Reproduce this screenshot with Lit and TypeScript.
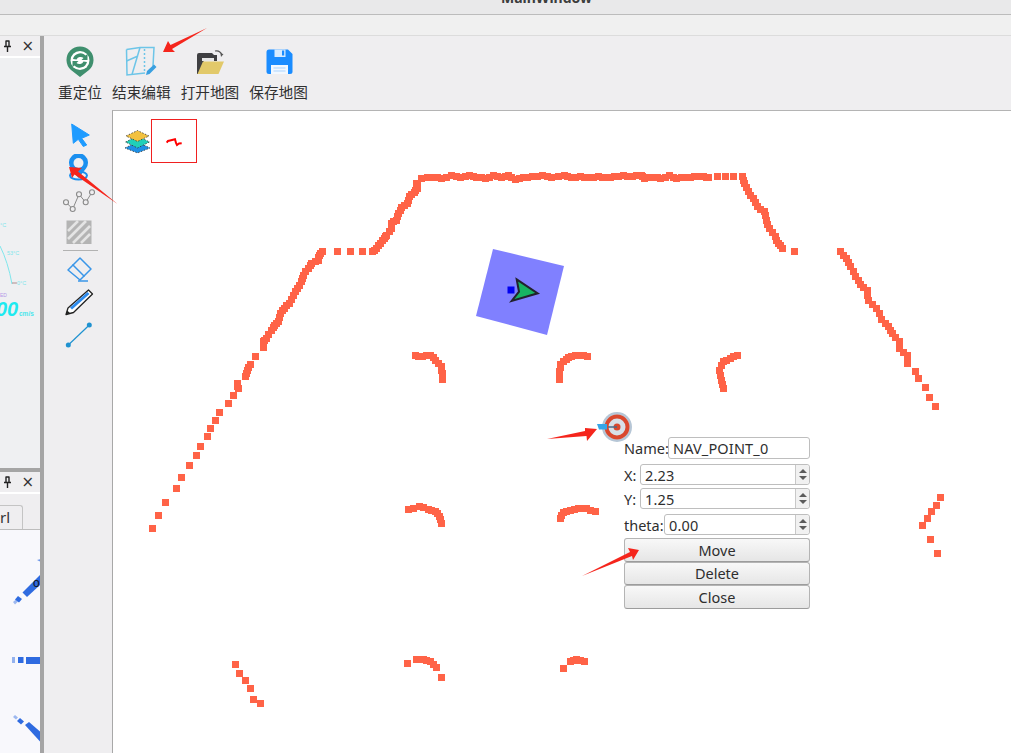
import { LitElement, html, css, svg } from "lit";
import { customElement } from "lit/decorators.js";

type Group = { ox: number; oy: number; sx: number; sy: number; fill: number; pts: number[][] };

const A = { ox: 140, oy: 160, sx: 3, sy: 3 };
const B = { ox: 400, oy: 160, sx: 2.8, sy: 3 };
const C = { ox: 220, oy: 490, sx: 3, sy: 3 };
const D = { ox: 900, oy: 480, sx: 3, sy: 3 };

const SCAN: Group[] = [
  { ...A, fill: 8, pts: [[37,1104],[55,1066],[76,1027],[108,985],[124,953],[148,917],[168,885],[181,858],[202,828],[212,804],[226,780],[238,757],[265,730],[280,707],[295,686],[292,670],[315,650],[322,630],[331,614],[345,590]] },
  { ...A, fill: 11, pts: [[369,562],[370,545],[378,535],[395,512],[403,495],[416,485],[422,460],[433,445],[447,430],[460,405],[472,385],[485,365],[490,345],[505,325],[515,310],[535,300],[537,285],[548,275]] },
  { ...A, fill: 0, pts: [[592,275],[630,275],[668,275]] },
  { ...A, fill: 11, pts: [[697,275],[710,265],[720,250],[733,235],[740,225],[755,205],[753,190],[770,180],[775,160],[785,143],[803,130],[808,110],[822,98],[832,85],[830,70]] },
  { ...B, fill: 14, pts: [[60,55],[95,52],[115,55],[145,47],[170,52],[195,47],[215,52],[240,55],[262,47],[285,52],[305,47],[322,58],[345,52],[370,50],[400,47],[425,52],[460,47],[480,52],[505,50],[530,52],[555,50],[580,52],[600,50],[625,47],[650,50],[675,45],[685,55],[710,52],[730,55],[755,47],[775,55],[800,52],[825,50],[850,50],[865,52]] },
  { ...B, fill: 0, pts: [[888,50],[911,50],[935,50]] },
  { ...B, fill: 12, pts: [[958,50],[965,70],[975,95],[990,115],[1000,140],[1020,155],[1025,180],[1035,205],[1050,230],[1060,250],[1072,265]] },
  { ...B, fill: 0, pts: [[1104,275]] },
  { ...B, fill: 12, pts: [[1233,275],[1250,295],[1262,320],[1275,350],[1290,372],[1308,390],[1312,420],[1335,445],[1348,478],[1368,500],[1378,520],[1398,545],[1398,565],[1422,587],[1422,610]] },
  { ...B, fill: 0, pts: [[1442,633],[1452,656],[1470,682],[1482,712],[1500,738]] },
  { ...B, fill: 12, pts: [[42,587],[62,590],[85,585],[100,600],[115,620],[118,640],[118,657]] },
  { ...B, fill: 12, pts: [[447,657],[447,635],[450,612],[465,597],[480,590],[500,585],[525,588]] },
  { ...B, fill: 12, pts: [[945,585],[925,595],[905,605],[895,630],[900,660],[905,685]] },
  { ...C, fill: 12, pts: [[565,58],[597,50],[625,57],[645,65],[657,78],[664,100]] },
  { ...C, fill: 12, pts: [[1020,85],[1030,68],[1050,60],[1075,55],[1100,55],[1125,65]] },
  { ...C, fill: 0, pts: [[46,522],[58,549],[75,571],[90,594],[100,627],[121,641]] },
  { ...C, fill: 0, pts: [[562,519]] },
  { ...C, fill: 10, pts: [[588,509],[610,509],[630,514],[648,532]] },
  { ...C, fill: 0, pts: [[664,561],[1031,536]] },
  { ...C, fill: 10, pts: [[1050,514],[1070,507],[1093,514]] },
  { ...D, fill: 0, pts: [[120,53],[108,75],[93,95],[82,116],[67,135],[91,179],[111,219]] },
];

function expand(g: Group): number[][] {
  const out: number[][] = [];
  const abs = g.pts.map(([x, y]) => [g.ox + x / g.sx, g.oy + y / g.sy]);
  abs.forEach((p, i) => {
    out.push(p);
    const n = abs[i + 1];
    if (n && Math.hypot(n[0] - p[0], n[1] - p[1]) < g.fill) {
      out.push([(p[0] + n[0]) / 2, (p[1] + n[1]) / 2]);
    }
  });
  return out;
}

const scanDots = SCAN.flatMap(expand).map(
  ([x, y]) => svg`<rect class="dot" x=${Math.round(x - 3.5)} y=${Math.round(y - 3.5)} width="7" height="7"></rect>`
);

@customElement("app-root")
export class AppRoot extends LitElement {
  static styles = css`
    :host { display: block; position: relative; width: 1011px; height: 753px; overflow: hidden; background: #efeef0; font-family: "Noto Sans", "Noto Sans CJK SC", sans-serif; color: #2e2e2e; }
    * { box-sizing: border-box; }
    svg { display: block; }
    .titlebar { height: 15px; background: #e9e9ea; border-bottom: 1px solid #bcbcbc; display: flex; justify-content: center; overflow: hidden; }
    .titlebar span { font: bold 14px/14px "Noto Sans", sans-serif; margin-top: -9px; margin-left: 82px; color: #3c3c3c; }
    .menubar { height: 21px; background: #f0f0f0; border-bottom: 1px solid #dcdcdc; }
    .body { display: flex; height: 717px; }
    .docks { width: 40px; display: flex; flex-direction: column; overflow: hidden; flex: none; }
    .dock-head { height: 20px; flex: none; display: flex; justify-content: flex-end; align-items: center; gap: 9px; padding-right: 6px; }
    .close { font: 15px/1 "DejaVu Sans", sans-serif; color: #333; }
    .strip { height: 2px; background: #fff; flex: none; }
    .dock-top { height: 432px; flex: none; display: flex; flex-direction: column; }
    .gauge { flex: 1; background: #eff0f2; }
    .hsplit { height: 4px; flex: none; background: #a5a5a5; }
    .tabbar { height: 36px; flex: none; display: flex; align-items: flex-end; background: #efeef0; border-bottom: 1px solid #bdbdbd; }
    .tab { width: 23px; height: 24px; border: 1px solid #c4c4c4; border-left: 0; border-bottom: 0; border-radius: 0 3px 0 0; font-size: 15px; line-height: 22px; text-align: right; padding-right: 12px; color: #333; }
    .bars { flex: 1; background: #f8f8fc; }
    .vsplit { width: 4px; flex: none; background: #a5a5a5; }
    .main { flex: 1; display: flex; flex-direction: column; min-width: 0; }
    .toolbar { height: 74px; flex: none; display: flex; gap: 10px; padding: 9px 0 0 14px; }
    .tbtn { display: flex; flex-direction: column; align-items: center; gap: 4px; }
    .tbtn label { font: 14.67px/20px "Noto Sans CJK SC", sans-serif; color: #303030; white-space: nowrap; }
    .work { flex: 1; display: flex; min-height: 0; }
    .tools { width: 68px; flex: none; display: flex; flex-direction: column; align-items: center; gap: 6px; padding: 12px 0 0 4px; }
    .sep { width: 35px; height: 1px; background: #b2b2b2; flex: none; }
    .canvas { flex: 1; position: relative; background: #fff; border-left: 1px solid #a8a8a8; border-top: 1px solid #b4b4b4; overflow: hidden; }
    .map { position: absolute; left: 0; top: 0; }
    .dot { fill: #ff6347; }
    .form { position: absolute; left: 511px; top: 326px; width: 186px; display: flex; flex-direction: column; font-size: 14.5px; color: #2e2e2e; }
    .row { display: flex; align-items: center; }
    .row.name { height: 22px; margin-bottom: 5px; }
    .row.x { height: 21px; margin-bottom: 3px; }
    .row.y { height: 21px; margin-bottom: 5px; }
    .row.t { height: 21px; margin-bottom: 3px; }
    .lab { flex: none; white-space: nowrap; }
    .lab.w-name { width: 44px; }
    .lab.w-xy { width: 16px; }
    .lab.w-t { width: 40px; }
    .box { flex: 1; height: 100%; background: #fff; border: 1px solid #bebebe; border-radius: 3px; display: flex; align-items: center; padding-left: 4px; min-width: 0; letter-spacing: 0.15px; }
    .val { flex: 1; }
    .spin { width: 14px; height: 100%; border-left: 1px solid #c8c8c8; background: #f1f1f1; border-radius: 0 3px 3px 0; display: flex; flex-direction: column; align-items: center; justify-content: center; gap: 3px; }
    .up { width: 0; height: 0; border-left: 4px solid transparent; border-right: 4px solid transparent; border-bottom: 4px solid #5c5c5c; }
    .down { width: 0; height: 0; border-left: 4px solid transparent; border-right: 4px solid transparent; border-top: 4px solid #5c5c5c; }
    .btn { height: 23.5px; border: 1px solid #b4b4b4; border-bottom-color: #9c9c9c; border-radius: 3px; background: linear-gradient(#f8f8f8, #e6e6e6); display: flex; align-items: center; justify-content: center; }
    .notes { position: absolute; left: 0; top: 0; pointer-events: none; }
  `;

  private dockHead() {
    return html`<div class="dock-head">
      <svg width="9" height="12" viewBox="0 0 9 12"><path d="M2.5 1h4M3 1v5M6 1v5M1 6.5h7M4.5 6.5V12" fill="none" stroke="#222" stroke-width="1.4"/></svg>
      <span class="close">×</span>
    </div>`;
  }

  private spin() {
    return html`<div class="spin"><i class="up"></i><i class="down"></i></div>`;
  }

  render() {
    return html`
      <div class="titlebar"><span>MainWindow</span></div>
      <div class="menubar"></div>
      <div class="body">
        <div class="docks">
          <div class="dock-top">
            ${this.dockHead()}
            <div class="strip"></div>
            <div class="gauge">
              <svg width="40" height="410" viewBox="0 58 40 410">
                <path d="M0 246Q8 262 12 284" fill="none" stroke="#7fe6ec" stroke-width="1"/>
                <path d="M12 283h5" stroke="#b08a8a" stroke-width="1"/>
                <text x="0" y="227" font-size="5.5" fill="#7fe6ec" font-family="Liberation Sans">°C</text>
                <text x="7" y="255" font-size="5.5" fill="#7fe6ec" font-family="Liberation Sans">53°C</text>
                <text x="17" y="285" font-size="5.5" fill="#7fe6ec" font-family="Liberation Sans">0°C</text>
                <text x="0" y="297" font-size="5" fill="#b49ae8" font-family="Liberation Sans">ED</text>
                <text x="-4" y="316" font-size="20" font-weight="bold" font-style="italic" fill="#1eeaf0" font-family="Liberation Sans">00</text>
                <text x="19" y="316" font-size="6.5" font-weight="bold" fill="#4be6ec" font-family="Liberation Sans">cm/s</text>
              </svg>
            </div>
          </div>
          <div class="hsplit"></div>
          ${this.dockHead()}
          <div class="strip"></div>
          <div class="tabbar"><div class="tab">rl</div></div>
          <div class="bars">
            <svg width="40" height="225" viewBox="0 529 40 225">
              <g fill="#2f6be0">
                <path d="M37 559l4-1v3z" opacity=".7"/>
                <path d="M22.500 591.500L40 574v10l-13 12z"/>
                <path d="M18 595l4 3-3 3.500-4-3z"/>
                <path d="M13 601l3-2.500 2 2-3 3z" opacity=".45"/>
                <rect x="26" y="656" width="14" height="7"/>
                <rect x="18" y="656" width="5.500" height="6"/>
                <rect x="12" y="656" width="3" height="6" opacity=".5"/>
                <path d="M25 724l4-3 11 9.500v10z"/>
                <path d="M17 720l3-3 4 3.500-3 3z"/>
                <path d="M13 716l2-2 3 2.500-2 2z" opacity=".45"/>
              </g>
              <text x="33" y="586" font-size="12" fill="#111" font-family="Liberation Sans">o</text>
            </svg>
          </div>
        </div>
        <div class="vsplit"></div>
        <div class="main">
          <div class="toolbar">
            <div class="tbtn">
              <svg width="32" height="33" viewBox="64 46 32 33">
                <path d="M80 78L71 71A13.500 13.500 0 1 1 89 71Z" fill="#3f8f6e"/>
                <circle cx="80" cy="61.500" r="9.500" fill="#fff"/>
                <path d="M73 60a7.500 7.500 0 0 1 12.500-3.500l2-1.500v6h-6l2-2a4.500 4.500 0 0 0-7 1.500zM87 63a7.500 7.500 0 0 1-12.500 3.500l-2 1.500v-6h6l-2 2a4.500 4.500 0 0 0 7-1.500z" fill="#3f8f6e"/>
              </svg>
              <label>重定位</label>
            </div>
            <div class="tbtn">
              <svg width="36" height="33" viewBox="123 46 36 33">
                <g fill="none" stroke="#6dc5e8" stroke-width="1.500">
                  <path d="M126.500 50.500L140 48.500L154 48.500L153 67"/>
                  <path d="M126.500 50.500L127 76L145 74"/>
                  <path d="M140 48.500L132 75.500M126.500 62L138 57"/>
                  <path d="M144.500 50V72" stroke-dasharray="2 2"/>
                </g>
                <path d="M146 76l1-4 7-6.500 2.500 2.500-7 7z" fill="#3aa0e0"/>
              </svg>
              <label>结束编辑</label>
            </div>
            <div class="tbtn">
              <svg width="32" height="33" viewBox="195 46 32 33">
                <path d="M198 75V56q0-2 2-2h13l2 2h3v6H205l-5 13z" fill="#3f3f42"/>
                <path d="M198.500 75L204 62.500H225L219.500 75z" fill="#e2c96a"/>
                <path d="M216 52q5-1 7 4" fill="none" stroke="#555" stroke-width="1.200"/>
                <path d="M222 58l2.500-3-3-.5z" fill="#555"/>
                <path d="M203 59h12v3h-12z" fill="#e8e8e8"/>
              </svg>
              <label>打开地图</label>
            </div>
            <div class="tbtn">
              <svg width="32" height="33" viewBox="263 46 32 33">
                <path d="M269 50.500H288L292.500 55V72.500Q292.500 75 290 75H269Q266.500 75 266.500 72.500V53Q266.500 50.500 269 50.500Z" fill="#1a8cff"/>
                <rect x="274.500" y="50.500" width="11" height="7.500" fill="#d7ebff"/>
                <rect x="282" y="51.500" width="2.200" height="5" fill="#1a8cff"/>
                <rect x="271" y="66" width="17" height="9" fill="#f2f8ff"/>
                <path d="M273.500 69h12M273.500 72h12" stroke="#a9d3ff" stroke-width="1"/>
              </svg>
              <label>保存地图</label>
            </div>
          </div>
          <div class="work">
            <div class="tools">
              <svg width="36" height="26" viewBox="62 122 36 26"><path d="M71.700 124L89.300 135L81.700 138.300L86.700 145L83.300 146.500L78.300 139.300L73.300 143.300Z" fill="#1e9bff" stroke="#1e9bff" stroke-linejoin="round"/></svg>
              <svg width="36" height="28" viewBox="62 154 36 28">
                <ellipse cx="78.500" cy="175.500" rx="8.500" ry="4" fill="none" stroke="#1a8fef" stroke-width="2"/>
                <path d="M78.500 178L71 168.500A9.500 9.500 0 1 1 86 168.500Z" fill="#1a8fef"/>
                <circle cx="78.500" cy="163" r="5" fill="#efeef0"/>
              </svg>
              <svg width="36" height="26" viewBox="62 188 36 26">
                <path d="M66 202.300L72.700 209L79 194.300L85.700 202.300L92 192.300" fill="none" stroke="#8a8a8a" stroke-width="1"/>
                <g fill="#efeef0" stroke="#8a8a8a" stroke-width="1.100">
                  <circle cx="66" cy="202.300" r="2.500"/><circle cx="72.700" cy="209" r="2.500"/><circle cx="79" cy="194.300" r="2.500"/><circle cx="85.700" cy="202.300" r="2.500"/><circle cx="92" cy="192.300" r="2.500"/>
                </g>
              </svg>
              <svg width="36" height="24" viewBox="62 221 36 24">
                <rect x="66.500" y="221.500" width="25" height="23.500" fill="#b4b4b4"/>
                <path d="M68 232L78 222M68 240L86 222M73 244L90 227M81 244L90 235" stroke="#e4e4e4" stroke-width="2.600"/>
              </svg>
              <div class="sep"></div>
              <svg width="36" height="25" viewBox="62 257 36 25">
                <g fill="none" stroke="#3a96e8" stroke-width="1.500" stroke-linejoin="round">
                  <path d="M80 258L91 269L80 280L68 270Z"/>
                  <path d="M72.500 264.500L84.500 276.500"/>
                </g>
                <path d="M78 281H88" stroke="#3a96e8" stroke-width="1.500"/>
              </svg>
              <svg width="36" height="28" viewBox="62 288 36 28">
                <path d="M66 314.500L68 308L88.500 290L92.500 294L73.500 312.500Z" fill="#fff" stroke="#222" stroke-width="1.300" stroke-linejoin="round"/>
                <path d="M71 308.500L88.500 293" stroke="#2d8bee" stroke-width="3"/>
                <path d="M66 314.500L67.200 310.500L70 313Z" fill="#222"/>
              </svg>
              <svg width="36" height="26" viewBox="62 322 36 26">
                <path d="M68.300 345L89.300 325" stroke="#1f92d0" stroke-width="1.200"/>
                <circle cx="68.300" cy="345" r="2.500" fill="#1f92d0"/><circle cx="89.300" cy="325" r="2.500" fill="#1f92d0"/>
              </svg>
            </div>
            <div class="canvas">
              <svg class="map" width="898" height="643" viewBox="113 111 898 643">
                <g stroke="#333" stroke-width=".8" stroke-dasharray="1.500 1.500">
                  <path d="M125 148L137.500 142L150 148L137.500 153Z" fill="#1e90e6"/>
                  <path d="M125.500 142L137.500 136L149.500 142L137.500 148Z" fill="#20d0b8"/>
                  <path d="M126 136L137.500 130.500L149 136L137.500 141.500Z" fill="#f2c13f"/>
                </g>
                <rect x="151.500" y="119.500" width="45" height="43" fill="#fff" stroke="#f02020" stroke-width="1"/>
                <path d="M166.700 142.700L168 141L170 140.500L172 140L175 139.300L176 143L177 145L179 143.500L181.700 143.300" fill="none" stroke="#f00" stroke-width="2"/>
                ${scanDots}
                <path d="M493 249L564 266L547 335L476 316Z" fill="#8080ff"/>
                <rect x="507.500" y="286.500" width="7" height="7" fill="#0000f0"/>
                <path d="M516.700 279.300L537.700 293.300L511.700 301L519 291.700Z" fill="#17b363" stroke="#22222e" stroke-width="2" stroke-linejoin="miter"/>
                <circle cx="617" cy="427" r="15" fill="#b6c6d6"/>
                <circle cx="617" cy="427" r="12.500" fill="#d8e0e8"/>
                <circle cx="617" cy="427" r="10.500" fill="none" stroke="#d9482e" stroke-width="4"/>
                <circle cx="617" cy="427" r="3.500" fill="#d9482e"/>
                <path d="M608 427H617" stroke="#4a6a8a" stroke-width="1.500"/>
                <path d="M597 424H607V429.500H599Z" fill="#36a6e8"/>
              </svg>
              <div class="form">
                <div class="row name"><span class="lab w-name">Name:</span><div class="box"><span class="val">NAV_POINT_0</span></div></div>
                <div class="row x"><span class="lab w-xy">X:</span><div class="box"><span class="val">2.23</span>${this.spin()}</div></div>
                <div class="row y"><span class="lab w-xy">Y:</span><div class="box"><span class="val">1.25</span>${this.spin()}</div></div>
                <div class="row t"><span class="lab w-t">theta:</span><div class="box"><span class="val">0.00</span>${this.spin()}</div></div>
                <div class="btn">Move</div>
                <div class="btn">Delete</div>
                <div class="btn">Close</div>
              </div>
            </div>
          </div>
        </div>
      </div>
      <svg class="notes" width="1011" height="753" viewBox="0 0 1011 753">
        <g fill="#f5251c">
          <path d="M207 28L172 49L175 52L163 52L168 41L170.500 45Z"/>
          <path d="M69 167L82 168L78 171.500L117.500 204L74.500 174.500L72 178Z"/>
          <path d="M547 439L585 431L585 428L597 429L587 441L586.500 436Z"/>
          <path d="M582 576L630 552L628 548L639 550L633 560L632 556Z"/>
        </g>
      </svg>
    `;
  }
}
